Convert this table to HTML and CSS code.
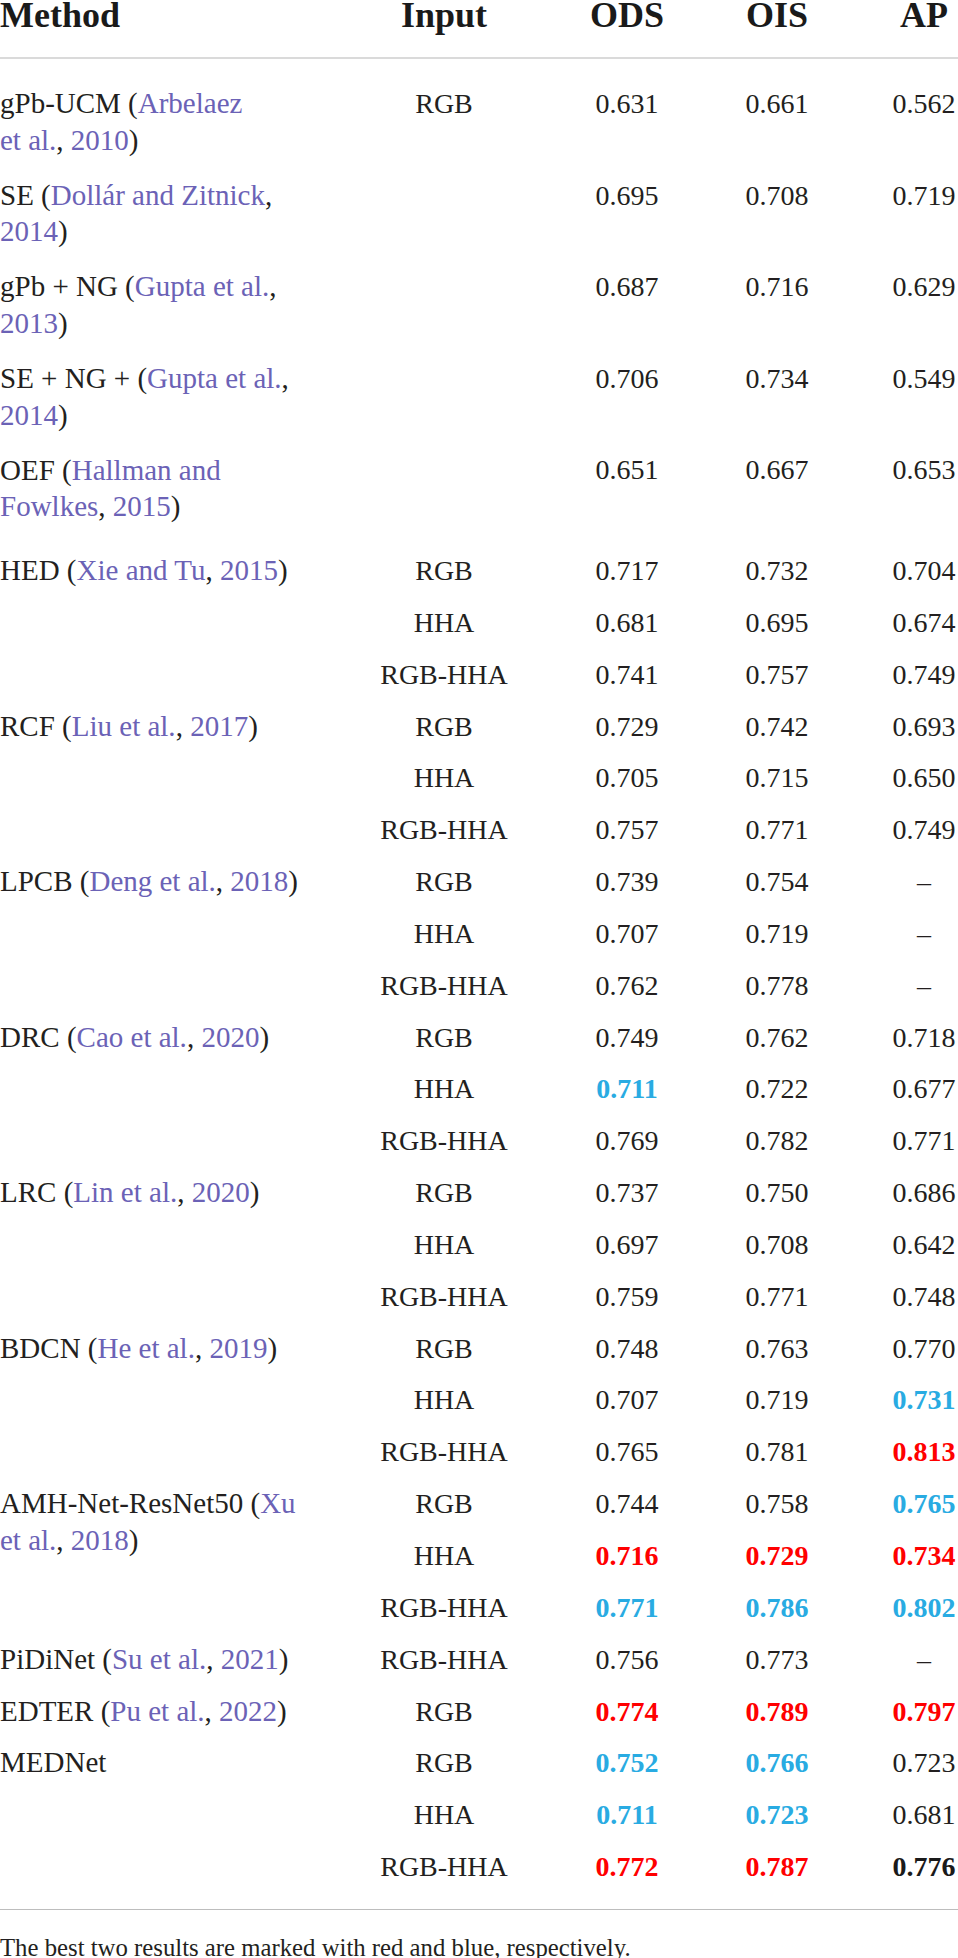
FILE: index.html
```html
<!DOCTYPE html>
<html lang="en">
<head>
<meta charset="utf-8">
<title>Edge detection results</title>
<link rel="stylesheet" href="styles.css">
</head>
<body>
<div class="wrap">
<table class="results">
  <colgroup>
    <col class="c-method">
    <col class="c-input">
    <col class="c-ods">
    <col class="c-ois">
    <col class="c-ap">
  </colgroup>
  <thead>
    <tr>
      <th class="left">Method</th>
      <th>Input</th>
      <th>ODS</th>
      <th>OIS</th>
      <th class="ap">AP</th>
    </tr>
  </thead>
  <tbody>
    <tr class="double first">
      <td class="m">gPb-UCM (<a class="ref">Arbelaez<br>et al.</a>, <a class="ref">2010</a>)</td>
      <td>RGB</td><td>0.631</td><td>0.661</td><td class="ap">0.562</td>
    </tr>
    <tr class="double">
      <td class="m">SE (<a class="ref">Dollár and Zitnick</a>,<br><a class="ref">2014</a>)</td>
      <td></td><td>0.695</td><td>0.708</td><td class="ap">0.719</td>
    </tr>
    <tr class="double">
      <td class="m">gPb + NG (<a class="ref">Gupta et al.</a>,<br><a class="ref">2013</a>)</td>
      <td></td><td>0.687</td><td>0.716</td><td class="ap">0.629</td>
    </tr>
    <tr class="double">
      <td class="m">SE + NG + (<a class="ref">Gupta et al.</a>,<br><a class="ref">2014</a>)</td>
      <td></td><td>0.706</td><td>0.734</td><td class="ap">0.549</td>
    </tr>
    <tr class="double end">
      <td class="m">OEF (<a class="ref">Hallman and<br>Fowlkes</a>, <a class="ref">2015</a>)</td>
      <td></td><td>0.651</td><td>0.667</td><td class="ap">0.653</td>
    </tr>

    <tr>
      <td class="m" rowspan="3">HED (<a class="ref">Xie and Tu</a>, <a class="ref">2015</a>)</td>
      <td>RGB</td><td>0.717</td><td>0.732</td><td class="ap">0.704</td>
    </tr>
    <tr><td>HHA</td><td>0.681</td><td>0.695</td><td class="ap">0.674</td></tr>
    <tr><td>RGB-HHA</td><td>0.741</td><td>0.757</td><td class="ap">0.749</td></tr>

    <tr>
      <td class="m" rowspan="3">RCF (<a class="ref">Liu et al.</a>, <a class="ref">2017</a>)</td>
      <td>RGB</td><td>0.729</td><td>0.742</td><td class="ap">0.693</td>
    </tr>
    <tr><td>HHA</td><td>0.705</td><td>0.715</td><td class="ap">0.650</td></tr>
    <tr><td>RGB-HHA</td><td>0.757</td><td>0.771</td><td class="ap">0.749</td></tr>

    <tr>
      <td class="m" rowspan="3">LPCB (<a class="ref">Deng et al.</a>, <a class="ref">2018</a>)</td>
      <td>RGB</td><td>0.739</td><td>0.754</td><td class="ap">–</td>
    </tr>
    <tr><td>HHA</td><td>0.707</td><td>0.719</td><td class="ap">–</td></tr>
    <tr><td>RGB-HHA</td><td>0.762</td><td>0.778</td><td class="ap">–</td></tr>

    <tr>
      <td class="m" rowspan="3">DRC (<a class="ref">Cao et al.</a>, <a class="ref">2020</a>)</td>
      <td>RGB</td><td>0.749</td><td>0.762</td><td class="ap">0.718</td>
    </tr>
    <tr><td>HHA</td><td class="second">0.711</td><td>0.722</td><td class="ap">0.677</td></tr>
    <tr><td>RGB-HHA</td><td>0.769</td><td>0.782</td><td class="ap">0.771</td></tr>

    <tr>
      <td class="m" rowspan="3">LRC (<a class="ref">Lin et al.</a>, <a class="ref">2020</a>)</td>
      <td>RGB</td><td>0.737</td><td>0.750</td><td class="ap">0.686</td>
    </tr>
    <tr><td>HHA</td><td>0.697</td><td>0.708</td><td class="ap">0.642</td></tr>
    <tr><td>RGB-HHA</td><td>0.759</td><td>0.771</td><td class="ap">0.748</td></tr>

    <tr>
      <td class="m" rowspan="3">BDCN (<a class="ref">He et al.</a>, <a class="ref">2019</a>)</td>
      <td>RGB</td><td>0.748</td><td>0.763</td><td class="ap">0.770</td>
    </tr>
    <tr><td>HHA</td><td>0.707</td><td>0.719</td><td class="ap second">0.731</td></tr>
    <tr><td>RGB-HHA</td><td>0.765</td><td>0.781</td><td class="ap best">0.813</td></tr>

    <tr>
      <td class="m amh" rowspan="3">AMH-Net-ResNet50 (<a class="ref">Xu<br>et al.</a>, <a class="ref">2018</a>)</td>
      <td>RGB</td><td>0.744</td><td>0.758</td><td class="ap second">0.765</td>
    </tr>
    <tr><td>HHA</td><td class="best">0.716</td><td class="best">0.729</td><td class="ap best">0.734</td></tr>
    <tr><td>RGB-HHA</td><td class="second">0.771</td><td class="second">0.786</td><td class="ap second">0.802</td></tr>

    <tr>
      <td class="m">PiDiNet (<a class="ref">Su et al.</a>, <a class="ref">2021</a>)</td>
      <td>RGB-HHA</td><td>0.756</td><td>0.773</td><td class="ap">–</td>
    </tr>
    <tr>
      <td class="m">EDTER (<a class="ref">Pu et al.</a>, <a class="ref">2022</a>)</td>
      <td>RGB</td><td class="best">0.774</td><td class="best">0.789</td><td class="ap best">0.797</td>
    </tr>

    <tr>
      <td class="m" rowspan="3">MEDNet</td>
      <td>RGB</td><td class="second">0.752</td><td class="second">0.766</td><td class="ap">0.723</td>
    </tr>
    <tr><td>HHA</td><td class="second">0.711</td><td class="second">0.723</td><td class="ap">0.681</td></tr>
    <tr class="last"><td>RGB-HHA</td><td class="best">0.772</td><td class="best">0.787</td><td class="ap strong">0.776</td></tr>
  </tbody>
</table>
<p class="note">The best two results are marked with red and blue, respectively.</p>
</div>
</body>
</html>
```

FILE: styles.css
```css
html, body {
  margin: 0;
  padding: 0;
  background: #ffffff;
}

body {
  font-family: "Liberation Serif", "Times New Roman", serif;
  color: #231f20;
}

.wrap {
  width: 958px;
}

.results {
  width: 958px;
  table-layout: fixed;
  border-collapse: separate;
  border-spacing: 0;
}

.c-method { width: 372px; }
.c-input  { width: 144px; }
.c-ods    { width: 222px; }
.c-ois    { width: 78px; }
.c-ap     { width: 142px; }

.results th {
  font-size: 36px;
  font-weight: bold;
  line-height: 30px;
  padding: 0 0 27px 0;
  text-align: center;
  vertical-align: top;
  color: #1a1a1a;
  border-bottom: 2px solid #dadada;
  white-space: nowrap;
}

.results th.left {
  text-align: left;
}

.results td {
  font-size: 28px;
  line-height: 35px;
  padding: 8px 0 8.85px 0;
  text-align: center;
  vertical-align: top;
  white-space: nowrap;
}

.results th.ap,
.results td.ap {
  padding-left: 74px;
}

.results td.m {
  text-align: left;
  font-size: 29px;
}

.results tr.double td {
  padding-bottom: 11.35px;
}

.results tr.double td.m {
  line-height: 36.5px;
  padding-top: 7.25px;
}

.results tr.first td {
  padding-top: 27px;
}

.results tr.first td.m {
  padding-top: 26.25px;
}

.results tr.end td {
  padding-bottom: 20.35px;
}

.results td.amh {
  line-height: 36.5px;
  padding-top: 7.25px;
}

.results tr.last td {
  padding-bottom: 24.85px;
}

.ref {
  color: #6b62b6;
  text-decoration: none;
}

.best {
  color: #ff0000;
  font-weight: bold;
}

.second {
  color: #29abe2;
  font-weight: bold;
}

.strong {
  font-weight: bold;
  color: #1a1a1a;
}

.note {
  margin: 0;
  border-top: 1px solid #bdbdbd;
  padding-top: 23px;
  font-size: 24.75px;
  line-height: 30px;
  color: #231f20;
}
```
